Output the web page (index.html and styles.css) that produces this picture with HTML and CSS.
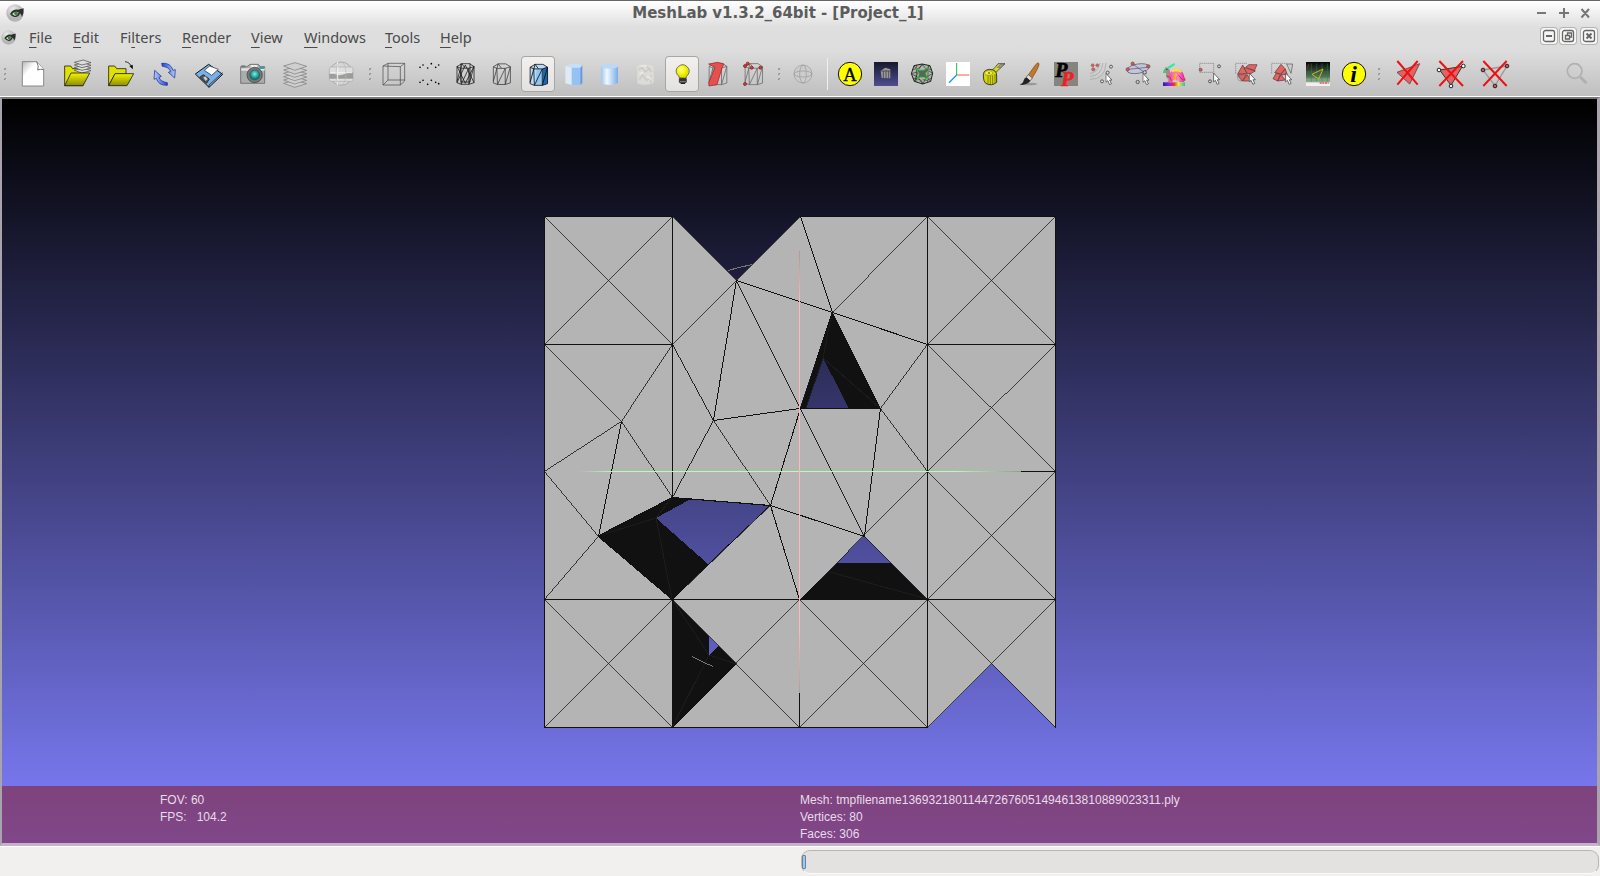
FILE: index.html
```html
<!DOCTYPE html>
<html lang="en">
<head>
<meta charset="utf-8">
<title>MeshLab v1.3.2_64bit - [Project_1]</title>
<link rel="stylesheet" href="styles.css">
</head>
<body>
<svg class="defs" width="0" height="0">
  <defs>
    <linearGradient id="yel" x1="0" y1="0" x2="0" y2="1"><stop offset="0" stop-color="#f4f400"/><stop offset="1" stop-color="#8c8c00"/></linearGradient>
    <linearGradient id="blu" x1="0" y1="0" x2="1" y2="0"><stop offset="0" stop-color="#9cc6f2"/><stop offset=".35" stop-color="#f2f8ff"/><stop offset="1" stop-color="#78aee8"/></linearGradient>
    <linearGradient id="arr" x1="0" y1="0" x2="1" y2="0"><stop offset="0" stop-color="#1646e8"/><stop offset="1" stop-color="#b4ccfa"/></linearGradient>
    <linearGradient id="arl" x1="1" y1="0" x2="0" y2="0"><stop offset="0" stop-color="#1646e8"/><stop offset="1" stop-color="#b4ccfa"/></linearGradient>
    <linearGradient id="rain" x1="0" y1="0" x2="1" y2="0"><stop offset="0" stop-color="#22e070"/><stop offset=".35" stop-color="#ff4fa0"/><stop offset=".6" stop-color="#ffc020"/><stop offset=".8" stop-color="#f050e0"/><stop offset="1" stop-color="#e02020"/></linearGradient>
    <linearGradient id="base" x1="0" y1="0" x2="1" y2="0"><stop offset="0" stop-color="#2020b0"/><stop offset=".3" stop-color="#a020e0"/><stop offset=".5" stop-color="#f03030"/><stop offset=".7" stop-color="#f0f020"/><stop offset="1" stop-color="#20c0c0"/></linearGradient>
    <linearGradient id="night" x1="0" y1="0" x2="0" y2="1"><stop offset="0" stop-color="#17172e"/><stop offset="1" stop-color="#4f4f92"/></linearGradient>
    <linearGradient id="plot" x1="0" y1="0" x2="0" y2="1"><stop offset="0" stop-color="#050505"/><stop offset=".6" stop-color="#56705a"/><stop offset=".85" stop-color="#b8c8b8"/><stop offset=".86" stop-color="#f6eeee"/></linearGradient>
    <linearGradient id="page" x1="0" y1="0" x2="1" y2="1"><stop offset="0" stop-color="#b8b8b8"/><stop offset=".35" stop-color="#fff"/></linearGradient>
    <radialGradient id="bulb" cx=".4" cy=".35"><stop offset="0" stop-color="#ffffd0"/><stop offset=".4" stop-color="#ffff20"/><stop offset="1" stop-color="#e8e000"/></radialGradient>
    <radialGradient id="lens" cx=".5" cy=".4"><stop offset="0" stop-color="#7ff0e8"/><stop offset="1" stop-color="#0a7478"/></radialGradient>
    <radialGradient id="orb" cx=".4" cy=".3"><stop offset="0" stop-color="#eee"/><stop offset="1" stop-color="#b4b4b4"/></radialGradient>
    <linearGradient id="axg" x1="0" y1="0" x2="1" y2="0"><stop offset="0" stop-color="#b4b4b4"/><stop offset=".08" stop-color="#b4ffb4"/><stop offset=".85" stop-color="#b4ffb4"/><stop offset="1" stop-color="#8ca08c"/></linearGradient>
    <linearGradient id="axr" x1="0" y1="0" x2="0" y2="1"><stop offset="0" stop-color="#b49696"/><stop offset=".12" stop-color="#ffb9b9"/><stop offset=".85" stop-color="#ffb9b9"/><stop offset="1" stop-color="#b49c9c"/></linearGradient>
    <symbol id="eye" viewBox="0 0 54 54"><circle cx="27" cy="27" r="26" fill="url(#orb)"/><path d="M12 30Q21 14 36 17L53 13Q54 27 48 39Q46 31 42 28Q38 41 25 39Q17 37 12 30z" fill="#2c302c"/><path d="M18 30Q27 20 38 25Q34 36 26 35z" fill="#cfe2cb"/><circle cx="30" cy="28" r="5.500" fill="#3c8040"/></symbol>
    <symbol id="cursor" viewBox="0 0 24 42"><path d="M2 2V31L8 26L14 39L20 36L14 24H22z" fill="#fff" stroke="#444" stroke-width="2.500"/></symbol>
    <symbol id="prism" viewBox="0 0 60 70"><path d="M3 12L18 3H42L56 12V62L40 67H16L3 62zM3 12L14 17L40 17L56 12M14 17L16 67M40 17V67M3 58L18 3M16 67L40 17M40 67L56 12M18 3L28 16" fill="none"/></symbol>
  </defs>
</svg>

<div class="window">
  <header class="titlebar">
    <svg class="app-icon" viewBox="0 0 54 54"><use href="#eye"/></svg>
    <h1 class="title">MeshLab v1.3.2_64bit - [Project_1]</h1>
    <svg class="win-controls" viewBox="0 0 56 14"><path d="M2 7H11M24 7H34M29 2V12M46.500 3L54 11.500M54 3L46.500 11.500" stroke="#777" stroke-width="2" fill="none"/></svg>
  </header>

  <nav class="menubar">
    <svg class="doc-icon" viewBox="0 0 54 54"><use href="#eye"/></svg>
    <ul class="menus">
      <li class="m-file"><u>F</u>ile</li>
      <li class="m-edit"><u>E</u>dit</li>
      <li class="m-filters">Fi<u>l</u>ters</li>
      <li class="m-render"><u>R</u>ender</li>
      <li class="m-view"><u>V</u>iew</li>
      <li class="m-windows"><u>W</u>indows</li>
      <li class="m-tools"><u>T</u>ools</li>
      <li class="m-help"><u>H</u>elp</li>
    </ul>
    <div class="mdi">
      <svg class="mdi-btn" viewBox="0 0 16 16"><rect x="2.500" y="2.500" width="11" height="11" rx="2"/><path d="M5 8H11" stroke-width="2"/></svg>
      <svg class="mdi-btn" viewBox="0 0 16 16"><rect x="2.500" y="2.500" width="11" height="11" rx="2"/><path d="M5.500 7.500H9.500V11H5.500zM7.500 7V5H11.500V9H10"/></svg>
      <svg class="mdi-btn last" viewBox="0 0 16 16"><rect x="2.500" y="2.500" width="11" height="11" rx="2"/><path d="M5.500 5.500L10.500 10.500M10.500 5.500L5.500 10.500" stroke-width="2"/></svg>
    </div>
  </nav>

  <div class="toolbar">
    <span class="grip g1"><i></i><i></i><i></i></span>
    <svg class="big" viewBox="33 168 132 108"><path d="M67 185H110L131 208V258H67z" fill="url(#page)" stroke="#777" stroke-width="2.500"/><path d="M110 185Q118 200 113 210Q122 206 131 209" fill="#fff" stroke="#555" stroke-width="2.500"/></svg>
    <svg class="big" viewBox="165 168 132 108"><path d="M194 257V198H212L218 206H249V257z" fill="#e2e200" stroke="#222" stroke-width="2.500"/><g fill="#ddd" stroke="#444" stroke-width="2"><path d="M223 211L250 204L273 212L246 219z"/><path d="M223 203L250 196L273 204L246 211z"/><path d="M223 195L250 188L273 196L246 203z"/><path d="M223 187L250 180L273 188L246 195z"/></g><path d="M194 257L213 219H269L249 257z" fill="url(#yel)" stroke="#222" stroke-width="2.500"/></svg>
    <svg class="big" viewBox="297 168 132 108"><path d="M326 257V198H344L350 206H378V222H345z" fill="#e2e200" stroke="#222" stroke-width="2.500"/><path d="M326 257L345 221H401L381 257z" fill="url(#yel)" stroke="#222" stroke-width="2.500"/><path d="M375 185Q392 187 395 204" fill="none" stroke="#111" stroke-width="2.500"/><path d="M388 198L399 208L398 194z" fill="#111"/></svg>
    <svg class="big" viewBox="429 168 132 108"><g stroke="#14247c" stroke-width="2"><path d="M485 190Q512 187 519 211L526 209L524 234L505 217L512 214Q506 201 487 199z" fill="url(#arr)"/><path d="M502 256Q475 257 469 235L462 238L464 211L484 229L477 233Q482 245 502 248z" fill="url(#arl)"/></g></svg>
    <svg class="big" viewBox="561 168 132 108"><path d="M586 222L626 193L668 223L627 262z" fill="#78b0e8" stroke="#111" stroke-width="3"/><path d="M613 211L629 198L655 208L635 226z" fill="#fff" stroke="#223" stroke-width="2"/><path d="M599 232L610 224L628 237L620 250z" fill="#555" stroke="#111" stroke-width="2"/><path d="M610 233L616 229L623 237L617 243z" fill="#ccc"/><path d="M627 262V255L668 218" stroke="#111" stroke-width="2" fill="none"/></svg>
    <svg class="big" viewBox="693 168 132 108"><path d="M722 200H741L750 193H774L782 200H794V250H722z" fill="#a9adab" stroke="#555" stroke-width="2"/><path d="M724 205H794V212H724z" fill="#e4e4e4"/><rect x="724" y="196" width="12" height="6" fill="#777"/><rect x="752" y="195" width="20" height="9" fill="#eee"/><rect x="778" y="199" width="14" height="8" fill="#3aa0a0"/><circle cx="764" cy="225" r="23" fill="#777" stroke="#3c3c3c" stroke-width="2"/><circle cx="764" cy="225" r="15" fill="url(#lens)" stroke="#144"/></svg>
    <svg class="big" viewBox="825 168 132 108"><g fill="#cfcfcf" stroke="#777" stroke-width="2"><path d="M851 250L885 240L920 251L884 262z"/><path d="M851 240L885 230L920 241L884 252z"/><path d="M851 230L885 220L920 231L884 242z"/><path d="M851 220L885 210L920 221L884 232z"/><path d="M851 210L885 200L920 211L884 222z"/><path d="M851 198L885 188L920 199L884 211z"/></g></svg>
    <svg class="big" viewBox="957 168 132 108"><circle cx="1023" cy="221" r="35" fill="#d6d6d6" stroke="#aaa" stroke-width="3"/><rect x="988" y="201" width="71" height="43" rx="5" fill="#dedede" stroke="#aaa" stroke-width="2"/><path d="M988 222Q1000 219 1010 224T1040 220T1059 221V236H988z" fill="#9c9c98"/><path d="M1013 186V256M991 218H1056" stroke="#f3f3f3" stroke-width="3"/><ellipse cx="1023" cy="221" rx="15" ry="35" fill="none" stroke="#b8b8b8" stroke-width="2"/></svg>
    <span class="grip g2"><i></i><i></i><i></i></span>
    <svg class="ico" viewBox="18 168 108 108"><path d="M39 198L54 190H104L91 200zM39 198V255H91V200M91 255L104 243V190M54 190V240H104M54 240L39 255" fill="none" stroke="#444" stroke-width="2"/></svg>
    <svg class="ico" viewBox="126 168 108 108"><path d="M150 202h.1M159 195h.1M173 204h.1M184 191h.1M197 202h.1M206 195h.1M150 247h.1M159 241h.1M173 253h.1M184 241h.1M197 247h.1M206 251h.1" stroke="#000" stroke-width="5" stroke-linecap="round"/></svg>
    <svg class="ico" viewBox="234 168 108 108"><g stroke="#1c1c1c" fill="none" stroke-width="2.400"><use href="#prism" x="258" y="187" width="58" height="70"/><path d="M261 199L286 250L312 199M261 248L286 195L312 248M273 190V246H300V190"/></g></svg>
    <svg class="ico" viewBox="342 168 108 108"><g stroke="#3c3c3c" stroke-width="2.400"><use href="#prism" x="367" y="188" width="58" height="69"/></g></svg>
    <svg class="ico on" viewBox="453 168 102 108"><path d="M481 201L499 194H521L533 200V250L519 256H495L481 251z" fill="#b8dbfa"/><path d="M519 206L533 200V250L519 256z" fill="#1b66b0"/><path d="M500 207H519V256H496z" fill="#8fc5f5"/><g stroke="#111" stroke-width="2.500"><use href="#prism" x="477" y="190" width="60" height="69"/></g></svg>
    <svg class="ico" viewBox="558 168 108 108"><path d="M586 198H606V255L586 250z" fill="#e0eaf7"/><path d="M605 200H631V255H605z" fill="#94c2f2"/><path d="M631 198L637 196V250L631 254z" fill="#5f9de0"/><path d="M586 198L600 192H628L637 197L630 203H604z" fill="#c8dffa"/></svg>
    <svg class="ico" viewBox="666 168 108 108"><path d="M693 198V250Q718 260 744 250V198z" fill="url(#blu)"/><ellipse cx="718.500" cy="199" rx="25.500" ry="7" fill="#bcd8f7"/></svg>
    <svg class="ico" viewBox="774 168 108 108"><path d="M801 197Q825 188 851 198V248Q826 260 802 250z" fill="#dcdbd8"/><path d="M806 210L817 202L825 216L840 205M808 238L818 225L830 242L845 226M831 200L845 216M842 240V250" fill="none" stroke="#cac9c6" stroke-width="4"/><path d="M808 222L820 217M831 229L841 235M812 198H829" stroke="#ecebe8" stroke-width="5"/></svg>
    <svg class="ico on" viewBox="885 168 102 108"><path d="M928 234Q928 228 922 224A19 19 0 1 1 954 224Q948 228 948 235z" fill="url(#bulb)" stroke="#555" stroke-width="2.500"/><rect x="928" y="235" width="21" height="13" rx="2" fill="#777" stroke="#111" stroke-width="2"/><path d="M929 240H948M932 250H945" stroke="#222" stroke-width="4"/></svg>
    <svg class="ico" viewBox="990 168 108 108"><g stroke="#666" stroke-width="2.300"><use href="#prism" x="1014" y="187" width="61" height="70"/></g><path d="M1016 192L1043 187L1062 192L1056 204L1041 254L1017 258L1016 248L1035 202z" fill="#e85050" stroke="#8c2020" stroke-width="2"/></svg>
    <svg class="ico" viewBox="1098 168 108 108"><g stroke="#666" stroke-width="2.300"><use href="#prism" x="1122" y="188" width="60" height="69"/></g><g fill="#e03c3c" stroke="#701010" stroke-width="2"><circle cx="1125" cy="198" r="4.500"/><circle cx="1133" cy="191" r="4.500"/><circle cx="1145" cy="203" r="4.500"/><circle cx="1171" cy="203" r="4.500"/><circle cx="1125" cy="252" r="4.500"/></g></svg>
    <span class="grip g3"><i></i><i></i><i></i></span>
    <svg class="ico" viewBox="72 168 108 108"><g fill="none" stroke="#999" stroke-width="2"><circle cx="129" cy="222" r="27" fill="#ccc"/><ellipse cx="129" cy="222" rx="10" ry="27"/><ellipse cx="129" cy="222" rx="27" ry="9"/></g></svg>
    <span class="sep"></span>
    <svg class="ico" viewBox="216 168 108 108"><circle cx="270" cy="222" r="35" fill="#ff0" stroke="#111" stroke-width="3"/><text x="270" y="242" text-anchor="middle" font-family="Liberation Serif, serif" font-size="56" stroke="#000">A</text></svg>
    <svg class="ico" viewBox="324 168 108 108"><rect x="342" y="186" width="72" height="72" fill="url(#night)"/><path d="M362 212L376 203L391 208V235L365 234z" fill="#9a9a9a"/><path d="M370 213V234M378 211V234M386 213V235M362 213H391" stroke="#45454c" stroke-width="2.500"/></svg>
    <svg class="ico" viewBox="432 168 108 108"><path d="M462 197L486 192L510 197L518 220L512 244L488 252L463 244L454 221z" fill="#b0b4b0" stroke="#222" stroke-width="3"/><path d="M462 197L475 215L454 221M475 215L463 244M486 192L477 207M486 192L498 207L510 197M498 207L518 220L500 231L512 244M500 231L488 252L474 232L463 244M454 221L474 232M470 194L468 246M505 196L503 246M456 209L475 205L490 193M458 234L482 240L490 251M516 209L500 206M515 234L500 241L488 239" fill="none" stroke="#222" stroke-width="1.800"/><path d="M468 204L478 210H492L503 202L506 212L497 219L504 239L492 232H480L471 241L477 222z" fill="#5c655c" stroke="#38d838" stroke-width="2.500"/></svg>
    <svg class="ico" viewBox="540 168 108 108"><rect x="558" y="186" width="72" height="72" fill="#fff"/><path d="M590 225V189" stroke="#25b34b" stroke-width="3"/><path d="M590 225H628" stroke="#f05a5a" stroke-width="3"/><path d="M590 225L567 248" stroke="#16a0e0" stroke-width="4"/></svg>
    <svg class="ico" viewBox="648 168 108 108"><path d="M690 212Q700 211 714 191H735L708 217z" fill="#d4d430" stroke="#222" stroke-width="2"/><path d="M712 202L722 193H733L722 203z" fill="#999" stroke="#333"/><path d="M670 228Q668 210 689 208Q711 209 710 228V247Q694 260 677 250Q670 243 670 228z" fill="#d8d800" stroke="#222" stroke-width="2.500"/><path d="M684 226V252M691 226V254M698 226V253M705 222V250" stroke="#555500" stroke-width="2"/><ellipse cx="686" cy="219" rx="12" ry="7" fill="#f2f23c" stroke="#333"/><circle cx="687" cy="219" r="3" fill="#777700"/></svg>
    <svg class="ico" viewBox="756 168 108 108"><ellipse cx="806" cy="252" rx="26" ry="4" fill="#999"/><path d="M802 229L827 194Q836 184 837 193Q834 208 814 237z" fill="#c67828" stroke="#6a3c10" stroke-width="2"/><path d="M798 232L805 224L817 234L810 243z" fill="#ddd" stroke="#555" stroke-width="2"/><path d="M778 255Q790 251 791 241Q795 230 801 233L811 242Q805 254 778 255z" fill="#222"/></svg>
    <svg class="ico" viewBox="864 168 108 108"><rect x="882" y="186" width="72" height="72" fill="#858580"/><text class="pp" x="886" y="231" stroke="#000">P</text><text class="pp red" x="904" y="257">P</text></svg>
    <svg class="ico" viewBox="972 168 108 108"><g fill="none" stroke="#aaa" stroke-width="2.500"><path d="M990 220Q1012 220 1020 189M990 229Q1024 228 1029 189M990 238Q1036 239 1038 189"/></g><g fill="#ddd" stroke="#444" stroke-width="2.500"><circle cx="1053" cy="200" r="4.500"/><circle cx="1043" cy="218" r="4.500"/><circle cx="1026" cy="244" r="4.500"/></g><g fill="#f05050" stroke="#777" stroke-width="2"><circle cx="998" cy="196" r="4.500"/><circle cx="1012" cy="196" r="4.500"/><circle cx="1000" cy="208" r="5"/></g><use href="#cursor" x="1036" y="218" width="22" height="39"/></svg>
    <svg class="ico" viewBox="1080 168 108 108"><ellipse cx="1134" cy="206" rx="34" ry="14" transform="rotate(-10 1134 206)" fill="#c4c4e0" stroke="#555" stroke-width="2"/><path d="M1104 208L1163 202M1118 192L1160 222" stroke="#555" stroke-width="2"/><g fill="#f04848" stroke="#555" stroke-width="2"><circle cx="1103" cy="208" r="5"/><circle cx="1118" cy="191" r="5"/><circle cx="1165" cy="199" r="5"/></g><g fill="#ccc" stroke="#444" stroke-width="2.500"><circle cx="1154" cy="217" r="5"/><circle cx="1133" cy="246" r="5"/></g><use href="#cursor" x="1147" y="218" width="22" height="39"/></svg>
    <svg class="ico" viewBox="-42 168 108 108"><rect x="-21" y="247" width="66" height="11" fill="url(#base)"/><path d="M-20 213L-13 201L-6 204L-1 210L1 219Q12 204 30 209Q41 216 43 232L47 240L40 246H28L24 238L10 240L8 246H-8L-4 240L-12 230L-12 219L-21 219z" fill="url(#rain)"/><path d="M6 214Q22 205 34 216" fill="none" stroke="#ffe03c" stroke-width="6"/><path d="M3 222Q20 213 26 224Q14 235 23 241" fill="none" stroke="#f06cf0" stroke-width="4"/><path d="M-8 201L13 189L15 195L-4 207z" fill="#30eaa0"/><path d="M-12 208H-7" stroke="#064" stroke-width="3"/><path d="M-10 228Q0 226 5 242M26 226L38 240" fill="none" stroke="#c02880" stroke-width="3"/></svg>
    <svg class="ico" viewBox="66 168 108 108"><rect x="89" y="190" width="42" height="27" fill="none" stroke="#555" stroke-width="2" stroke-dasharray="3 3"/><circle cx="92" cy="209" r="4.500" fill="#f05050" stroke="#555" stroke-width="2"/><g fill="#ccc" stroke="#444" stroke-width="2.500"><circle cx="147" cy="199" r="4.500"/><circle cx="120" cy="244" r="4.500"/></g><use href="#cursor" x="129" y="217" width="22" height="39"/></svg>
    <svg class="ico" viewBox="174 168 108 108"><path d="M197 220V190H232" fill="none" stroke="#555" stroke-width="2" stroke-dasharray="3 3"/><g fill="#e06464" stroke="#5a3030" stroke-width="2"><path d="M227 202L236 194H261L253 212z"/><path d="M203 222L218 195L231 220z"/><path d="M231 220L222 203L256 213L240 222z"/><path d="M203 224H230L216 243z"/><path d="M232 224L242 243H218z"/></g><path d="M202 227L215 244L204 240z" fill="#ccc" stroke="#555"/><use href="#cursor" x="236" y="217" width="22" height="39"/></svg>
    <svg class="ico" viewBox="282 168 108 108"><path d="M305 220V190H350" fill="none" stroke="#555" stroke-width="2" stroke-dasharray="3 3"/><g fill="#e06464" stroke="#5a3030" stroke-width="2"><path d="M314 218L333 193L346 207L333 222z"/><path d="M333 222L346 207L352 224H334z"/><path d="M309 236L319 219L331 224L323 243z"/><path d="M333 224L346 240L323 243z"/></g><path d="M350 192H368L363 220z" fill="#ccc" stroke="#555" stroke-width="2"/><use href="#cursor" x="345" y="217" width="22" height="39"/></svg>
    <svg class="ico" viewBox="390 168 108 108"><rect x="408" y="186" width="72" height="72" fill="url(#plot)"/><path d="M408 216H480M408 230H480M408 243H480M424 190V245M440 190V245M456 190V245M472 190V245" stroke="#268a36" stroke-width="1.500"/><path d="M426 223L459 207L446 237z" fill="none" stroke="#c8b820" stroke-width="3"/><path d="M411 205L417 192" stroke="#c02020" stroke-width="2"/><path d="M449 249H476" stroke="#e05050" stroke-width="4" stroke-dasharray="6 2"/></svg>
    <svg class="ico" viewBox="498 168 108 108"><circle cx="552" cy="222" r="35" fill="#ff0" stroke="#111" stroke-width="3"/><text x="551" y="245" text-anchor="middle" font-family="Liberation Serif, serif" font-style="italic" font-weight="bold" font-size="72">i</text></svg>
    <span class="grip g4"><i></i><i></i><i></i></span>
    <svg class="big" viewBox="648 168 132 108"><path d="M681 217L749 191L719 252z" fill="#e06464" stroke="#6e3a3a" stroke-width="2.500"/><path d="M682 183L743 254M743 183L682 254" stroke="#f01010" stroke-width="6"/></svg>
    <svg class="big" viewBox="780 168 132 108"><path d="M809 210L877 199L843 256z" fill="#e06464" stroke="#222" stroke-width="2.500"/><g fill="#fff" stroke="#222" stroke-width="3"><circle cx="807" cy="210" r="5.500"/><circle cx="880" cy="198" r="5.500"/><circle cx="843" cy="258" r="5.500"/></g><path d="M808 183L879 258M879 183L808 258" stroke="#f01010" stroke-width="6"/></svg>
    <svg class="big" viewBox="912 168 132 108"><path d="M939 210L1011 198L975 257z" fill="none" stroke="#999" stroke-width="4"/><g fill="#e85050" stroke="#222" stroke-width="3"><circle cx="939" cy="210" r="5.500"/><circle cx="1011" cy="198" r="5.500"/><circle cx="975" cy="258" r="5.500"/></g><path d="M940 183L1010 258M1010 183L940 258" stroke="#f01010" stroke-width="6"/></svg>
    <svg class="search" viewBox="1185 168 75 108"><circle cx="1214" cy="213" r="22" fill="none" stroke="#b0b0b0" stroke-width="5"/><path d="M1231 231L1249 250" stroke="#b0b0b0" stroke-width="9"/></svg>
  </div>

  <main class="viewport">
    <svg class="mesh" viewBox="544 216 512 512" shape-rendering="crispEdges">
      <path fill="#b4b4b4" fill-rule="evenodd" d="M544 216H672L736 280L800 216H1056V728L992 664L927 728H544zM832 312L800 408H880zM672 497L770 505.500L672 599L598 536zM864 536L800 599H927zM672 599L736 664L672 728z"/>
      <path fill="#111" fill-rule="evenodd" d="M832 311L800 409H881zM823 358L849 408.500H806z"/>
      <path fill="#111" fill-rule="evenodd" d="M672 497L770 505.500L672 600L597 536zM656 518L690 499.500L769 506L708 564z"/>
      <path fill="#111" d="M837.500 563H891L927 599.500H800z"/>
      <path fill="#111" fill-rule="evenodd" d="M672 599L736 664L672 728zM709 637L718 646L709 655z"/>
      <path fill="none" stroke="#1c1c1c" d="M832 312L823 358L806 408M823 358L880 408M598 536L656 518L672 599M656 518L672 497M830 572L927 599M672 599L709 655L736 664M709 655L672 728"/>
      <g fill="none" stroke="#111">
        <path d="M544.500 216V728M672.500 216V497M672.500 599V728M799.500 693V728M927.500 216V728M1055.500 216V728"/>
        <path d="M544 216.500H672M800 216.500H1056M544 344.500H672M927 344.500H1056M1021 471.500H1056M544 599.500H1056M544 727.500H927M800 408.500H880"/>
        <g stroke-width=".73">
          <path d="M544.450 216.450L672.450 344.450M672.450 216.450L544.450 344.450"/>
          <path d="M927.450 216.450L1055.450 344.450M1055.450 216.450L927.450 344.450"/>
          <path d="M927.450 344.450L1055.450 471.450M1055.450 344.450L927.450 471.450"/>
          <path d="M927.450 471.450L1055.450 599.450M1055.450 471.450L927.450 599.450"/>
          <path d="M544.450 599.450L672.450 727.450M672.450 599.450L544.450 727.450"/>
          <path d="M799.450 599.450L927.450 727.450M927.450 599.450L799.450 727.450"/>
          <path d="M927.450 599.450L1055.450 727.450M1055.450 599.450L927.450 727.450"/>
          <path d="M672.450 599.450L799.450 727.450M799.450 599.450L672.450 727.450"/>
          <path d="M672.450 216.450L736.450 280.450L800.450 216.450M832.450 312.450L927.450 216.450M672.450 344.450L736.450 280.450"/>
          <path d="M544.450 344.450L621.450 421.450M927.450 471.450L800.450 599.450M864.450 536.450L927.450 599.450M770.450 505.450L672.450 599.450"/>
        </g>
        <g stroke-width=".8">
          <path d="M598.450 536.450L544.450 471.450M672.450 599.450L598.450 536.450L544.450 599.450M621.450 421.450L672.450 344.450M927.450 344.450L880.450 408.450L927.450 471.450M672.450 497.450L621.450 421.450L544.450 471.450M713.450 420.450L770.450 505.450"/>
        </g>
        <g stroke-width=".9">
          <path d="M672.450 344.450L713.450 420.450L672.450 497.450M736.450 280.450L800.450 408.450L864.450 536.450M832.450 312.450L880.450 408.450M598.450 536.450L672.450 497.450"/>
        </g>
        <path d="M800.450 216.450L832.450 312.450L800.450 408.450L713.450 420.450L736.450 280.450L832.450 312.450L927.450 344.450M621.450 421.450L598.450 536.450M800.450 408.450L770.450 505.450L799.450 599.450M880.450 408.450L864.450 536.450L770.450 505.450L672.450 497.450"/>
      </g>
      <path fill="none" stroke="#777" d="M728 270.500L739 267.500L752 264.500M692 656.500L704 662.500L713 666.500"/>
      <rect x="579" y="471" width="442" height="1" fill="url(#axg)"/>
      <rect x="799" y="251" width="1" height="442" fill="url(#axr)"/>
    </svg>
    <section class="info">
      <div class="info-left"><p>FOV: 60</p><p>FPS:&nbsp;&nbsp; 104.2</p></div>
      <div class="info-right"><p class="mesh-name">Mesh: tmpfilename136932180114472676051494613810889023311.ply</p><p>Vertices: 80</p><p>Faces: 306</p></div>
    </section>
  </main>

  <footer class="statusbar">
    <div class="progress"><span class="chunk"></span></div>
  </footer>
</div>
</body>
</html>
```

FILE: styles.css
```css
* { box-sizing: border-box; }
body { margin: 0; overflow: hidden; }
.defs { display: block; }
.defs, svg { flex: none; }
.window {
  width: 1600px; height: 876px;
  display: flex; flex-direction: column;
  border-top: 1px solid #666;
  background: linear-gradient(#fff 0, #dfdfdf 26px, #dddddd 50px, #bfbfbf 95px, #f1f0ee 96px);
}
.titlebar { height: 24px; display: flex; align-items: center; padding: 0 9px 0 6px; }
.app-icon { width: 18px; height: 18px; }
.title {
  flex: 1; margin: 0; padding-right: 3px; text-align: center;
  font: bold 15px/24px "DejaVu Sans", sans-serif; color: #5c5c5c;
  letter-spacing: -.04px; white-space: nowrap;
}
.win-controls { width: 56px; height: 14px; }
.menubar { height: 31px; display: flex; padding-top: 1px; }
.doc-icon { width: 15px; height: 15px; margin: 4px 0 0 1px; }
.menus {
  display: flex; list-style: none; margin: 0; padding: 0 0 0 13px; flex: 1;
  font: 14.500px/23px "Noto Sans", sans-serif; color: #4a4a4a; white-space: nowrap;
}
.menus u { text-underline-offset: 4px; text-decoration-thickness: 1px; }
.m-file { width: 44px; }
.m-edit { width: 47px; }
.m-filters { width: 62px; }
.m-render { width: 69px; }
.m-view { width: 53px; }
.m-windows { width: 81px; }
.m-tools { width: 55px; }
.mdi { display: flex; gap: 3px; padding: 2px 3px 0 0; }
.mdi-btn {
  width: 16px; height: 16px; border-radius: 3px; background: #f6f6f6;
  box-shadow: 0 0 0 1px #b4b4b0; fill: none; stroke: #666; stroke-width: 1.300;
}
.mdi-btn.last { margin-left: 2px; }
.toolbar { height: 40px; display: flex; align-items: flex-start; }
.big { width: 44px; height: 36px; }
.ico { width: 36px; height: 36px; }
.ico.on {
  border-radius: 4px; box-shadow: inset 0 0 0 1px #a8a6a2;
  background: linear-gradient(#f2f1ef, #e2e1df); margin: 0 1px; width: 34px;
}
.pp {
  font: italic bold 60px "Liberation Serif", serif;
  stroke-width: 2px;
}
.pp.red { fill: #f02020; stroke: #f02020; }
.grip { height: 36px; display: flex; flex-direction: column; justify-content: center; gap: 2px; flex: none; }
.grip i { width: 3px; height: 3px; border-radius: 50%; background: #888; box-shadow: inset -1px -1px 0 #ddd; }
.g1 { width: 11px; padding-left: 4px; }
.g2 { width: 13px; padding-left: 6px; }
.g3 { width: 12px; padding-left: 6px; }
.g4 { width: 14px; padding-left: 6px; }
.sep { width: 12px; height: 32px; margin-top: 2px; background: linear-gradient(90deg, transparent 7px, #f0f0f0 7px, #f0f0f0 8px, transparent 8px); }
.search { width: 25px; height: 36px; margin-left: auto; margin-right: 10px; }
.viewport {
  height: 749px; margin-top: 1px; display: flex; flex-direction: column; align-items: center;
  border: 2px solid #a9a3ad; border-top-color: #777; border-right-width: 3px;
  border-bottom: 3px solid #c6b1c8;
  outline: 1px solid #fff;
  background: linear-gradient(#000, #8080ff);
}
.mesh { width: 512px; height: 512px; margin: 117px 0 58px 1px; }
.info {
  align-self: stretch; flex: 1; display: flex; padding: 6px 0 0 158px;
  background: linear-gradient(#7e437c, #80478a);
  font: 12px/17px "Liberation Sans", sans-serif; color: #e8dcea;
}
.info p { margin: 0; height: 17px; white-space: nowrap; }
.mesh-name { letter-spacing: .02px; }
.info-left { width: 640px; }
.statusbar { flex: 1; display: flex; justify-content: flex-end; padding: 3px 1px 2px 0; background: #f1f0ee; border-top: 1px solid #fff; }
.progress {
  width: 798px; height: 24px; border-radius: 9px; background: #e3e2e0;
  border: 1px solid #b9b5b1; border-bottom-color: #fafafa; display: flex; align-items: center;
}
.chunk { width: 4px; height: 14px; border: 1px solid #5d87ab; border-radius: 1px; background: #a4c6e2; }
```
